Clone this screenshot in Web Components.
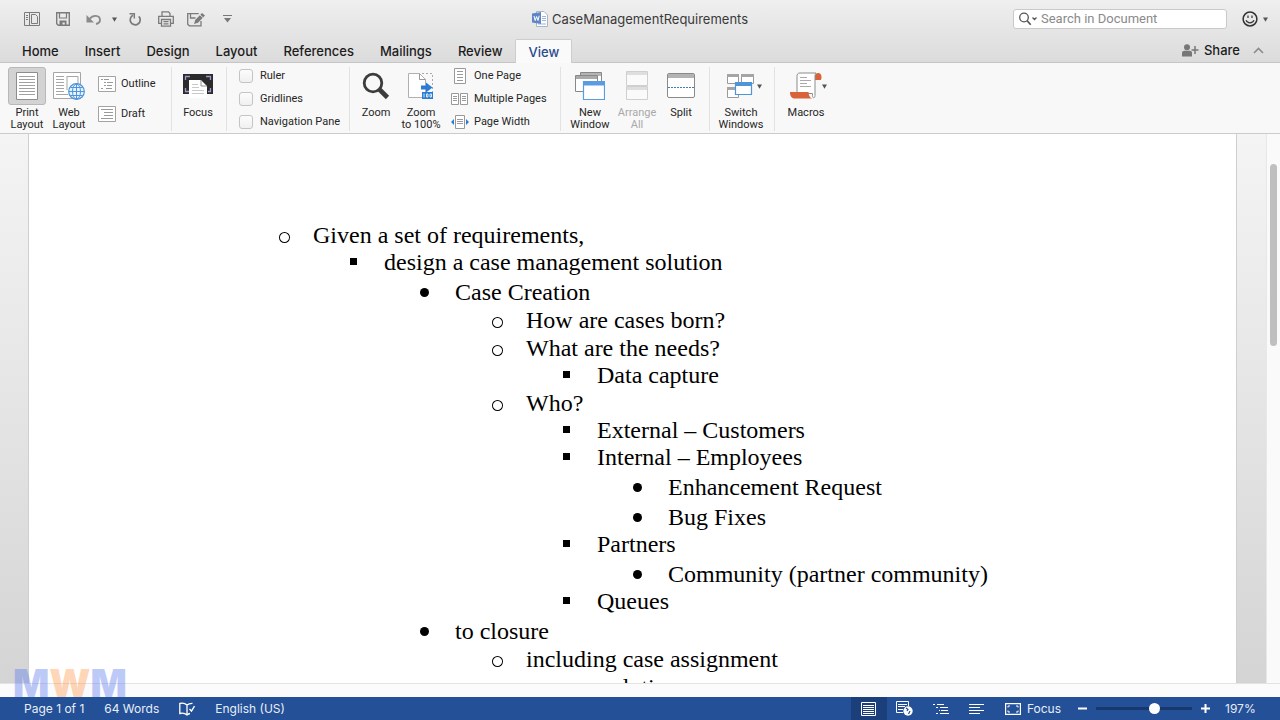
<!DOCTYPE html>
<html lang="en">
<head>
<meta charset="utf-8">
<meta name="viewport" content="width=device-width, initial-scale=1">
<title>CaseManagementRequirements</title>
<style>
  html, body { height: 100%; }
  body { margin: 0; overflow: hidden; font-family: Inter, "Liberation Sans", sans-serif; color: #262626; }
</style>
</head>
<body>
<word-app></word-app>

<script>
const ICONS = {
  sidebar: [16, 14, `<g fill="none" stroke="#7b7b7b"><path d="M.5 .5h15v13h-15zM5.500 1v12M2 3.500h2M2 5.500h2M2 7.500h2" /><path d="M7.500 2.500h4l2 2v7h-6z"/></g>`],
  save: [14, 14, `<path d="M.7.7h12.600v12.600h-11l-1.600-1.600z" fill="none" stroke="#7b7b7b" stroke-width="1.400"/><path d="M3.500 1v5h7V1" fill="none" stroke="#7b7b7b" stroke-width="1.200"/><path d="M3.500 8.500h7V13H8.800v-2.500H6.500V13h-3z" fill="#7b7b7b"/>`],
  undo: [16, 12, `<path d="M3.500 6C7 1.500 13.500 2 14 6.500c.1 2-1.500 4-4 4.500" fill="none" stroke="#8a8a8a" stroke-width="1.800"/><path d="M.5 2v7.500H8z" fill="#8a8a8a"/>`],
  redo: [14, 14, `<path d="M10.800 4.300A5 5 0 1 1 5 3.300" fill="none" stroke="#7b7b7b" stroke-width="1.700"/><path d="M1.500 1.800H6.300V6.500" fill="none" stroke="#7b7b7b" stroke-width="1.500"/>`],
  print: [16, 16, `<g fill="none" stroke="#7b7b7b" stroke-width="1.300"><path d="M4 5V.8h6.500L12 2.500V5M3.500 12.300H.7V5.300h14.600v7h-2.800M3.500 8.500h9v6.700h-9zM5.500 10.700h5M5.500 12.800h5"/></g>`],
  review: [19, 15, `<path d="M14 9v4.800H2.300L.7 12.200V1.700h11M3.500 2v4h5" fill="none" stroke="#7b7b7b" stroke-width="1.300"/><path d="M7 12l1.200-4L15 1l3 2.500-7 7.300z" fill="#7b7b7b"/><path d="M13 3l3 2.600" stroke="#e4e4e4"/>`],
  customize: [9, 8, `<path d="M0 .5h9" stroke="#777"/><path d="M1 3h7L4.500 7.500z" fill="#777"/>`],
  caret: [5, 5, `<path d="M0 .5h5L2.500 4.800z" fill="#555"/>`],
  wordDoc: [16, 16, `<path d="M4.500.5h7.500l3.500 3.500v11.500h-11z" fill="#fff" stroke="#a9b4c4"/><path d="M10 5.500h4M10 7.500h4M10 9.500h4M6 13h8" stroke="#9db4d8"/><path d="M0 2.500l9-1.500v12l-9-1.500z" fill="#5f86c4"/><path d="M2 5l1.200 4.500L4.600 5.500 6 9.500 7.200 4.800" fill="none" stroke="#fff"/>`],
  search: [19, 14, `<circle cx="5" cy="5.500" r="4.300" fill="none" stroke="#555" stroke-width="1.300"/><path d="M8.200 8.700l3.500 4" stroke="#555" stroke-width="1.700"/><path d="M13.500 5.500l2 2 2-2" fill="none" stroke="#555" stroke-width="1.300"/>`],
  smile: [16, 16, `<circle cx="8" cy="8" r="6.900" fill="none" stroke="#333" stroke-width="1.500"/><path d="M6 4.500v2.500M10 4.500v2.500" stroke="#333" stroke-width="1.200"/><path d="M4 9.300c1.500 3.300 6.500 3.300 8 0" fill="none" stroke="#333" stroke-width="1.200"/>`],
  share: [17, 13, `<circle cx="5" cy="3.300" r="3" fill="#777"/><path d="M0 12.500V9c0-1.500 1-2.300 2.300-2.300h5.400C9 6.700 10 7.500 10 9v3.500z" fill="#777"/><path d="M13 2v8M9.500 6h7" stroke="#777" stroke-width="1.500"/>`],
  collapse: [11, 7, `<path d="M1 6l4.500-4.500L10 6" fill="none" stroke="#8c8c8c" stroke-width="1.600"/>`],
  printLayout: [22, 28, `<path d="M.5.5h21v27H.5z" fill="#fff" stroke="#8d8d8d"/><path d="M3 4.500h16M3 7.500h16M3 10.500h16M3 13.500h16M3 16.500h16M3 19.500h16M3 22.500h16" stroke="#a0a0a0"/>`],
  webLayout: [32, 28, `<path d="M.5.500h27v26H.5z" fill="#fff" stroke="#a5a5a5"/><path d="M3 4.500h8M3 7.500h8M3 10.500h8M3 13.500h8M3 16.500h8M3 19.500h8M3 22.500h12M14 4.500h11v8M14 4v14" fill="none" stroke="#a5a5a5"/><circle cx="23.500" cy="19.500" r="7.800" fill="#e6f2fd" stroke="#4d94da" stroke-width="1.200"/><path d="M23.500 12v15M16 19.500h15M17.500 15.500h12M17.500 23.500h12" stroke="#4d94da"/><ellipse cx="23.500" cy="19.500" rx="4" ry="7.500" fill="none" stroke="#4d94da"/>`],
  outline: [18, 16, `<path d="M.5.500h17v15H.5z" fill="#fff" stroke="#a3a3a3"/><path d="M3 3.500h2M6 3.500h5M6 6.500h2M9 6.500h6M6 9.500h2M9 9.500h5M3 12.500h2M8 12.500h6" stroke="#999"/>`],
  draft: [18, 16, `<path d="M.5.500h17v15H.5z" fill="#fff" stroke="#a3a3a3"/><path d="M3 3.500h12M6 6.500h9M6 9.500h9M3 12.500h12" stroke="#999"/>`],
  focus: [30, 24, `<path d="M0 0h30v20H0z" fill="#2b2b2d"/><path d="M2.500 6V2.500H7M23 2.500h4.500V6M2.500 14v3.500H6M27.500 14v3.500H25" fill="none" stroke="#9c9ac4" stroke-width="1.300"/><path d="M6 6h12l6 6v12H6z" fill="#fff"/><path d="M18 6v6h6z" fill="#fff" stroke="#777" stroke-width=".8"/><path d="M9 10.500h6M9 13.500h7M9 16.500h12M9 19.500h12" stroke="#c9c9c9"/>`],
  zoom: [28, 28, `<circle cx="11" cy="11" r="8.800" fill="none" stroke="#3c3c3c" stroke-width="2.800"/><path d="M17.500 17.500l8 8" stroke="#3c3c3c" stroke-width="4.600"/>`],
  zoom100: [26, 28, `<path d="M.5 1.500h11l6 6v18H.5z" fill="#fff" stroke="#b0b0b0"/><path d="M11.500 1.500v6h6" fill="none" stroke="#999"/><path d="M14 1.500h10.500v20" fill="none" stroke="#aaa" stroke-dasharray="2 2"/><path d="M13 13.500h5V10.500l6.500 5-6.500 5V17.500h-5z" fill="#2b7cd3"/><rect x="14" y="20" width="11" height="7" fill="#2b7cd3"/><path d="M16 21.500v4M18.500 22h1.500v3h-1.500zM22 22h1.500v3H22z" fill="none" stroke="#fff" stroke-width=".8"/>`],
  onePage: [18, 16, `<path d="M3.500.500h11v15h-11z" fill="#fff" stroke="#999"/><path d="M6 3.500h6M6 6.500h6M6 9.500h6M6 12.500h6" stroke="#999"/>`],
  multiPages: [18, 12, `<path d="M.5.500h7v11h-7zM9.500.500h7v11h-7z" fill="#fff" stroke="#999"/><path d="M2 3.500h4M2 5.500h4M2 7.500h4M11 3.500h4M11 5.500h4M11 7.500h4" stroke="#999"/>`],
  pageWidth: [18, 14, `<path d="M4.500.500h9v13h-9z" fill="#fff" stroke="#999"/><path d="M6 4.500h6M6 6.500h6M6 8.500h6" stroke="#999"/><path d="M3 4v6L0 7zM15 4v6l3-3z" fill="#2b7cd3"/>`],
  newWindow: [30, 28, `<path d="M5.500.500h21v16h-21z" fill="#fff" stroke="#888"/><path d="M6 1h20v3H6z" fill="#b5b5b5"/><path d="M.5 3.500h22v16H.5z" fill="#fff" stroke="#888"/><path d="M1 4h21v3H1z" fill="#aaa"/><path d="M8.500 9.500h21v18h-21z" fill="#fff" stroke="#5b9ce0" stroke-width="1.200"/><path d="M8 9h22v4.500H8z" fill="#5b9ce0"/>`],
  arrangeAll: [22, 30, `<g stroke="#cfcfcf" fill="#fafafa"><path d="M.5.500h21v14H.5zM.5 15.500h21v13H.5z"/></g><path d="M1 1h20v3H1zM1 16h20v3H1z" fill="#dedede"/>`],
  split: [28, 26, `<rect x=".5" y=".5" width="27" height="24" rx="1.500" fill="#fff" stroke="#8a8a8a"/><path d="M1 1h26v4H1z" fill="#b3b3b3"/><path d="M1 14.500h26" stroke="#3f7fb8" stroke-dasharray="2 1"/>`],
  switchWindows: [28, 26, `<g fill="#fff" stroke="#9a9a9a"><path d="M.5 1.500h11v9H.5zM14.500 1.500h12v9h-12zM.5 14.500h11v10H.5z"/></g><path d="M0 1h12v3H0zM14 1h13v3H14zM0 14h10v3H0z" fill="#a5a5a5"/><path d="M8.500 9.500h16v12h-16z" fill="#fff" stroke="#4d94da" stroke-width="1.200"/><path d="M8 9h17v4H8z" fill="#4d94da"/>`],
  macros: [32, 28, `<path d="M25 8c-.5-4 0-7 3-7 2.500 0 3.500 2 3.500 4 0 1.500-.3 2.500-.8 3z" fill="#d8623a"/><path d="M26 1H10C7.500 1 7 2.500 7 4.500v17h15.500v2c0 3 2.500 3 2.500 0V5c0-2 .2-3.500 1-4z" fill="#fff" stroke="#8c8c8c"/><path d="M10 5.500h7M10 8.500h11M10 11.500h7M10 14.500h11" stroke="#aaa"/><path d="M0 20h18.500c.3 4 1.500 6.500 5 6.500H5C1.500 26.500 0 24 0 20z" fill="#d8623a"/>`],
  proof: [16, 14, `<path d="M8 3v9M8 3C6 1.200 3 1 .8 1.500v10C3 11 6 11.200 8 13c1-.8 2-1.300 3-1.500M8 3c1.500-1.300 3-1.800 5.500-1.700" fill="none" stroke="#fff" stroke-width="1.300"/><path d="M10.500 7l2 2L15.500 4" fill="none" stroke="#fff" stroke-width="1.400"/>`],
  sPrint: [15, 14, `<path d="M.5.500h14v13H.5z" fill="none" stroke="#fff"/><path d="M2 3.500h11M2 5.500h11M2 7.500h11M2 9.500h11M2 11.500h11" stroke="#fff"/>`],
  sWeb: [17, 15, `<path d="M7 11.500H.5v-11h12V5M2 3.500h9M2 5.500h7M2 8.500h5" fill="none" stroke="#fff"/><circle cx="12" cy="10" r="4.700" fill="#fff"/><path d="M10 7l2 1.500-1 1.500M12.500 13l1.500-3" fill="none" stroke="#235096" stroke-width="1.200"/>`],
  sOutline: [16, 12, `<path d="M0 1.500h2M4 1.500h7M3 4.500h2M7 4.500h8M6 7.500h1M8 7.500h7M3 10.500h2M7 10.500h9" stroke="#fff"/>`],
  sDraft: [15, 12, `<path d="M0 1.500h15M0 4.500h11M0 7.500h15M0 10.500h11" stroke="#fff" stroke-width="1.200"/>`],
  sFocus: [16, 12, `<path d="M.6.600h14.800v10.800H.6z" fill="none" stroke="#fff" stroke-width="1.200"/><path d="M3 4.500v-1.500h2M11 3h2v1.500M3 7.500v1.500h2M11 9h2V7.500" fill="none" stroke="#fff"/>`],
  minus: [9, 9, `<path d="M0 4.500h9" stroke="#fff" stroke-width="2"/>`],
  plus: [9, 9, `<path d="M0 4.500h9M4.500 0v9" stroke="#fff" stroke-width="2"/>`]
};

const RESET = `
  button { all: unset; box-sizing: border-box; display: flex; align-items: center; justify-content: center; cursor: default; }
`;

function define(name, template) {
  customElements.define(name, class extends HTMLElement {
    constructor() {
      super();
      this.attachShadow({ mode: 'open' });
    }
    connectedCallback() {
      const t = document.createElement('template');
      t.innerHTML = typeof template === 'function' ? template(this) : template;
      this.shadowRoot.replaceChildren(t.content.cloneNode(true));
    }
  });
}

define('ui-icon', el => {
  const [w, h, body] = ICONS[el.getAttribute('name')];
  return `<style>:host { display: inline-flex; flex: none; } svg { display: block; }</style>
    <svg width="${w}" height="${h}" viewBox="0 0 ${w} ${h}" aria-hidden="true">${body}</svg>`;
});

define('search-field', `
  <style>
    :host { display: flex; align-items: center; width: 214px; height: 20px; box-sizing: border-box;
      border: 1px solid #c9c9c9; border-radius: 3px; background: #fff; padding-left: 5px; gap: 3px; }
    input { flex: 1; min-width: 0; border: 0; padding: 0; outline: 0; background: none; font: 13px/18px Roboto, sans-serif; color: #333; }
    input::placeholder { color: #8a8a8a; opacity: 1; }
  </style>
  <ui-icon name="search"></ui-icon><input type="text" aria-label="Search in Document" placeholder="Search in Document">`);

define('title-bar', `
  <style>${RESET}
    :host { display: grid; grid-template-columns: 1fr auto 1fr; align-items: center; height: 38px; }
    .tools { display: flex; align-items: center; padding-left: 16px; }
    .tools button { width: 31px; height: 24px; }
    .tools .menu { width: 10px; }
    h1 { display: flex; align-items: center; gap: 4px; margin: 0; font-size: 13px; line-height: 16px; font-weight: 400; color: #3a3a3a; }
    .end { display: flex; align-items: center; justify-content: flex-end; padding-right: 12px; gap: 15px; }
    .end button { gap: 5px; }
  </style>
  <div class="tools">
    <button aria-label="Sidebar"><ui-icon name="sidebar"></ui-icon></button>
    <button aria-label="Save"><ui-icon name="save"></ui-icon></button>
    <button aria-label="Undo"><ui-icon name="undo"></ui-icon></button>
    <button class="menu" aria-label="Undo history"><ui-icon name="caret"></ui-icon></button>
    <button aria-label="Repeat"><ui-icon name="redo"></ui-icon></button>
    <button aria-label="Print"><ui-icon name="print"></ui-icon></button>
    <button aria-label="Track changes"><ui-icon name="review"></ui-icon></button>
    <button aria-label="Customize toolbar"><ui-icon name="customize"></ui-icon></button>
  </div>
  <h1><ui-icon name="wordDoc"></ui-icon>CaseManagementRequirements</h1>
  <div class="end">
    <search-field></search-field>
    <button aria-label="Feedback"><ui-icon name="smile"></ui-icon><ui-icon name="caret"></ui-icon></button>
  </div>`);

define('ribbon-tab', `
  <style>${RESET}
    :host { display: block; }
    button { height: 24px; padding: 0 13px; font-size: 13px; font-weight: 500; color: #1c1c1c; }
    :host([selected]) button { background: #fafafa; color: #2a4b8d; border: 1px solid #cdcdcd; border-bottom: 0; padding: 0 12px; border-radius: 2px 2px 0 0; }
  </style>
  <button role="tab"><slot></slot></button>`);

define('tab-strip', `
  <style>${RESET}
    :host { display: flex; align-items: flex-end; height: 24px; padding-left: 9px; border-bottom: 1px solid #c6c6c6; }
    nav { display: flex; flex: 1; margin-bottom: -1px; }
    .end { display: flex; gap: 13px; padding-right: 16px; height: 24px; }
    .share { gap: 5px; font-size: 13px; font-weight: 500; color: #1c1c1c; }
  </style>
  <nav role="tablist">
    <ribbon-tab>Home</ribbon-tab><ribbon-tab>Insert</ribbon-tab><ribbon-tab>Design</ribbon-tab><ribbon-tab>Layout</ribbon-tab>
    <ribbon-tab>References</ribbon-tab><ribbon-tab>Mailings</ribbon-tab><ribbon-tab>Review</ribbon-tab><ribbon-tab selected>View</ribbon-tab>
  </nav>
  <div class="end">
    <button class="share"><ui-icon name="share"></ui-icon>Share</button>
    <button aria-label="Collapse ribbon"><ui-icon name="collapse"></ui-icon></button>
  </div>`);

define('ribbon-button', el => `
  <style>${RESET}
    :host { display: block; flex: none; width: 44px; }
    button { position: relative; flex-direction: column; justify-content: flex-start; width: 100%; line-height: 12px; text-align: center; white-space: nowrap; }
    .icon { display: flex; align-items: center; justify-content: center; width: 38px; height: 38px; margin-bottom: 2px; box-sizing: border-box; border-radius: 3px; }
    :host([pressed]) .icon { background: #d3d3d3; border: 1px solid #b8b8b8; }
    :host([disabled]) button { color: #a9a9a9; }
    .menu { position: absolute; top: 17px; left: calc(50% + 16px); }
  </style>
  <button ${el.hasAttribute('disabled') ? 'disabled' : ''} ${el.hasAttribute('pressed') ? 'aria-pressed="true"' : ''}>
    <span class="icon"><ui-icon name="${el.getAttribute('icon')}"></ui-icon></span>
    <span><slot></slot></span>
    ${el.hasAttribute('menu') ? '<ui-icon class="menu" name="caret"></ui-icon>' : ''}
  </button>`);

define('ribbon-option', el => `
  <style>${RESET}
    :host { display: block; }
    button { justify-content: flex-start; gap: 5px; line-height: 16px; white-space: nowrap; }
    .icon { display: flex; justify-content: center; width: 18px; }
  </style>
  <button><span class="icon"><ui-icon name="${el.getAttribute('icon')}"></ui-icon></span><slot></slot></button>`);

define('ribbon-check', `
  <style>
    :host { display: block; }
    label { display: flex; align-items: center; gap: 7px; line-height: 16px; white-space: nowrap; }
    input { appearance: none; box-sizing: border-box; width: 14px; height: 14px; margin: 0; border: 1px solid #c4c4c4; border-radius: 3px; background: linear-gradient(#fcfcfc, #f0f0f0); }
  </style>
  <label><input type="checkbox"><slot></slot></label>`);

define('ribbon-group', `
  <style>
    :host { display: flex; flex: none; box-sizing: border-box; border-right: 1px solid #e2e2e2; }
    :host([last]) { border-right: 0; }
  </style>
  <slot></slot>`);

define('view-ribbon', `
  <style>
    :host { display: flex; box-sizing: border-box; height: 71px; padding: 4px 0 2px; background: #f8f8f8; border-bottom: 1px solid #cbcbcb; font: 11px Roboto, "Liberation Sans", sans-serif; }
    .stack { display: flex; flex-direction: column; }
    .pair { gap: 14px; padding: 9px 0 0 6px; }
    .triple { gap: 7px; padding-top: 1px; }
    .views { width: 172px; padding-left: 8px; }
    .focus { width: 55px; padding-left: 4px; }
    .show { width: 123px; padding-left: 12px; }
    .zoom { width: 211px; padding-left: 4px; }
    .zoom .triple { padding-left: 7px; }
    .window { width: 149px; padding-left: 4px; }
    .switch, .macros { width: 65px; padding-left: 6px; }
    .pressed { width: 38px; }
    .mid { width: 46px; }
    .wide { width: 50px; }
  </style>
  <ribbon-group class="views">
    <ribbon-button icon="printLayout" pressed class="pressed">Print<br>Layout</ribbon-button>
    <ribbon-button icon="webLayout" class="mid">Web<br>Layout</ribbon-button>
    <div class="stack pair">
      <ribbon-option icon="outline">Outline</ribbon-option>
      <ribbon-option icon="draft">Draft</ribbon-option>
    </div>
  </ribbon-group>
  <ribbon-group class="focus">
    <ribbon-button icon="focus">Focus</ribbon-button>
  </ribbon-group>
  <ribbon-group class="show">
    <div class="stack triple">
      <ribbon-check>Ruler</ribbon-check>
      <ribbon-check>Gridlines</ribbon-check>
      <ribbon-check>Navigation Pane</ribbon-check>
    </div>
  </ribbon-group>
  <ribbon-group class="zoom">
    <ribbon-button icon="zoom">Zoom</ribbon-button>
    <ribbon-button icon="zoom100" class="mid">Zoom<br>to 100%</ribbon-button>
    <div class="stack triple">
      <ribbon-option icon="onePage">One Page</ribbon-option>
      <ribbon-option icon="multiPages">Multiple Pages</ribbon-option>
      <ribbon-option icon="pageWidth">Page Width</ribbon-option>
    </div>
  </ribbon-group>
  <ribbon-group class="window">
    <ribbon-button icon="newWindow" class="wide">New<br>Window</ribbon-button>
    <ribbon-button icon="arrangeAll" disabled>Arrange<br>All</ribbon-button>
    <ribbon-button icon="split">Split</ribbon-button>
  </ribbon-group>
  <ribbon-group class="switch">
    <ribbon-button icon="switchWindows" menu class="wide">Switch<br>Windows</ribbon-button>
  </ribbon-group>
  <ribbon-group last class="macros">
    <ribbon-button icon="macros" menu class="wide">Macros</ribbon-button>
  </ribbon-group>`);

define('document-view', `
  <style>
    :host { display: flex; flex: 1; min-height: 0; overflow: hidden; }
    .canvas { flex: 1; min-width: 0; padding: 0 29px 0 28px; background: linear-gradient(#f4f4f4, #e6e6e6 45%, #d4d4d4); overflow: hidden; }
    article { min-height: 100%; box-sizing: border-box; padding: 87px 0 0 284px; background: #fff; border: 1px solid #cfcfcf; border-width: 0 1px; font: 24px/28px "Liberation Serif", "Times New Roman", serif; color: #000; }
    ul { list-style: none; margin: 0; padding: 0; }
    ul ul { padding-left: 71px; }
    p { position: relative; margin: 0; white-space: nowrap; }
    p::before { content: ""; position: absolute; box-sizing: border-box; background: #000; }
    .circle > p::before { left: -34px; top: 11px; width: 11px; height: 11px; border-radius: 50%; background: radial-gradient(circle, #fff 4px, #000 5px); }
    .square > p { margin-top: -1px; }
    .square > p::before { left: -34px; top: 10px; width: 7px; height: 7px; }
    .disc > p { padding-top: 2px; }
    .disc > p::before { left: -35px; top: 12px; width: 9px; height: 9px; border-radius: 50%; }
    .track { flex: none; width: 14px; box-sizing: border-box; padding: 30px 3px 0; background: #fafafa; border-left: 1px solid #e8e8e8; }
    .thumb { height: 35%; border-radius: 4px; background: #bfbfbf; }
  </style>
  <div class="canvas"><article>
    <ul>
      <li class="circle"><p>Given a set of requirements,</p><ul>
        <li class="square"><p>design a case management solution</p><ul>
          <li class="disc"><p>Case Creation</p><ul>
            <li class="circle"><p>How are cases born?</p></li>
            <li class="circle"><p>What are the needs?</p><ul>
              <li class="square"><p>Data capture</p></li></ul></li>
            <li class="circle"><p>Who?</p><ul>
              <li class="square"><p>External – Customers</p></li>
              <li class="square"><p>Internal – Employees</p><ul>
                <li class="disc"><p>Enhancement Request</p></li>
                <li class="disc"><p>Bug Fixes</p></li></ul></li>
              <li class="square"><p>Partners</p><ul>
                <li class="disc"><p>Community (partner community)</p></li></ul></li>
              <li class="square"><p>Queues</p></li></ul></li></ul></li>
          <li class="disc"><p>to closure</p><ul>
            <li class="circle"><p>including case assignment</p></li>
            <li class="circle"><p>some resolution</p></li></ul></li></ul></li></ul></li>
    </ul>
  </article></div>
  <div class="track"><div class="thumb"></div></div>`);

define('brand-mark', `
  <style>
    :host { display: block; position: absolute; left: 13px; bottom: 100%; height: 28px; font-size: 38px; line-height: 28px; font-weight: 900; color: #5b7cf0; opacity: .4; pointer-events: none; }
    span { color: #ff9a4d; }
  </style>M<span>W</span>M`);

define('status-bar', `
  <style>${RESET}
    :host { display: flex; position: relative; align-items: center; height: 23px; background: #235096; color: #e8eef8; font-size: 12px; line-height: 23px; white-space: nowrap; }
    .info { display: flex; flex: 1; align-items: center; gap: 20px; padding-left: 24px; }
    .views { display: flex; align-items: center; }
    .views button { width: 36px; height: 23px; }
    .views .on { background: #1b3f7b; }
    .views .focus { width: auto; gap: 6px; padding: 0 17px 0 10px; }
    .zoom { display: flex; align-items: center; gap: 9px; }
    input { appearance: none; width: 96px; height: 12px; margin: 0; background: linear-gradient(#17386f, #17386f) center / 100% 3px no-repeat; }
    input::-webkit-slider-thumb { appearance: none; width: 11px; height: 11px; border-radius: 50%; background: #fff; }
    output { width: 55px; padding-left: 6px; }
  </style>
  <brand-mark></brand-mark>
  <div class="info">
    <span>Page 1 of 1</span><span>64 Words</span>
    <button aria-label="Proofing"><ui-icon name="proof"></ui-icon></button><span>English (US)</span>
  </div>
  <div class="views">
    <button class="on" aria-label="Print Layout"><ui-icon name="sPrint"></ui-icon></button>
    <button aria-label="Web Layout"><ui-icon name="sWeb"></ui-icon></button>
    <button aria-label="Outline"><ui-icon name="sOutline"></ui-icon></button>
    <button aria-label="Draft"><ui-icon name="sDraft"></ui-icon></button>
    <button class="focus"><ui-icon name="sFocus"></ui-icon>Focus</button>
  </div>
  <div class="zoom">
    <button aria-label="Zoom out"><ui-icon name="minus"></ui-icon></button>
    <input type="range" min="0" max="100" value="62" aria-label="Zoom level">
    <button aria-label="Zoom in"><ui-icon name="plus"></ui-icon></button>
    <output>197%</output>
  </div>`);

define('word-app', `
  <style>
    :host { display: flex; flex-direction: column; height: 100vh; }
    header { background: linear-gradient(#efefef, #dbdbdb); }
    .gutter { flex: none; height: 14px; box-sizing: border-box; background: #fbfbfb; border-top: 1px solid #e3e3e3; }
    status-bar, view-ribbon, header { flex: none; }
  </style>
  <header><title-bar></title-bar><tab-strip></tab-strip></header>
  <view-ribbon></view-ribbon>
  <document-view></document-view>
  <div class="gutter"></div>
  <status-bar></status-bar>`);
</script>
</body>
</html>
